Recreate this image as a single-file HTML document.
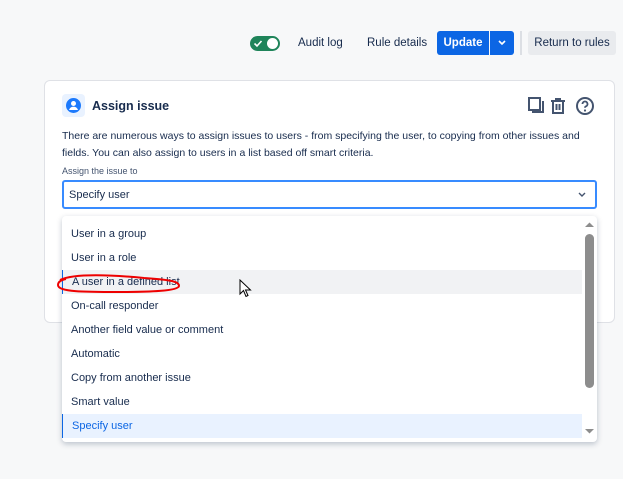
<!DOCTYPE html>
<html><head><style>
*{box-sizing:border-box;margin:0;padding:0}
body{width:623px;height:479px;background:#f7f8f9;font-family:"Liberation Sans",sans-serif;color:#172b4d;position:relative;overflow:hidden}
.a{position:absolute}
.btn{font-size:11.5px;line-height:25px;position:absolute;top:31px;height:24px}
.item{position:absolute;left:62px;width:520px;height:24px;line-height:25px;font-size:11px;padding-left:9px;color:#172b4d}
</style></head><body>
<div class="a" style="left:250px;top:36px;width:30px;height:15px;border-radius:8px;background:#1f845a"></div>
<div class="a" style="left:267px;top:38px;width:11px;height:11px;border-radius:50%;background:#fff"></div>
<svg class="a" style="left:253px;top:39px" width="10" height="9"><path d="M1.5 4.5l2.5 2.5 4.5-5" stroke="#fff" stroke-width="1.6" fill="none"/></svg>
<div class="btn" style="left:298px">Audit log</div>
<div class="btn" style="left:367px">Rule details</div>
<div class="btn" style="left:437px;width:52px;background:#0c66e4;color:#fff;font-weight:bold;text-align:center;border-radius:3px 0 0 3px">Update</div>
<div class="btn" style="left:490px;width:24px;background:#0c66e4;border-radius:0 3px 3px 0"></div>
<svg class="a" style="left:498px;top:40px" width="8" height="6"><path d="M1 1l3 3 3-3" stroke="#fff" stroke-width="1.6" fill="none"/></svg>
<div class="a" style="left:520px;top:31px;width:2px;height:24px;background:#dcdfe4"></div>
<div class="btn" style="left:528px;width:88px;background:#e9ebee;border-radius:3px;text-align:center">Return to rules</div>

<div class="a" style="left:44px;top:80px;width:571px;height:243px;background:#fff;border:1px solid #dfe1e6;border-radius:6px"></div>
<div class="a" style="left:62px;top:94px;width:23px;height:23px;background:#e9f2ff;border-radius:4px"></div>
<svg class="a" style="left:65px;top:97px" width="17" height="17" viewBox="0 0 17 17"><circle cx="8.5" cy="8.5" r="7.5" fill="#1d7afc"/><circle cx="8.5" cy="6.5" r="2.5" fill="#fff"/><path d="M4 13c1-2.5 2.5-3.2 4.5-3.2s3.5.7 4.5 3.2" fill="#fff"/></svg>
<div class="a" style="left:92px;top:99px;font-size:12.5px;font-weight:bold;color:#172b4d">Assign issue</div>
<svg class="a" style="left:527px;top:96px" width="70" height="20" viewBox="0 0 70 20">
<rect x="2" y="2" width="11" height="12" fill="none" stroke="#44546f" stroke-width="2"/><path d="M16 5v11H5" stroke="#44546f" stroke-width="2" fill="none"/>
<path d="M24 5h14M29 5V3h4v2M26 5v12h10V5M29.5 8v6M32.5 8v6" stroke="#44546f" stroke-width="2" fill="none"/>
<circle cx="58" cy="10" r="8" fill="none" stroke="#44546f" stroke-width="2"/><path d="M55.5 8a2.5 2.5 0 1 1 3.5 2.3c-.7.3-1 .8-1 1.5" stroke="#44546f" stroke-width="1.8" fill="none"/><circle cx="58" cy="14.5" r="1.1" fill="#44546f"/>
</svg>
<div class="a" style="left:62px;top:128px;width:540px;font-size:10.5px;line-height:17px;color:#172b4d">There are numerous ways to assign issues to users - from specifying the user, to copying from other issues and fields. You can also assign to users in a list based off smart criteria.</div>
<div class="a" style="left:62px;top:166px;font-size:9px;color:#44546f">Assign the issue to</div>
<div class="a" style="left:62px;top:180px;width:535px;height:29px;border:2px solid #388bff;border-radius:3px;background:#fff;font-size:11px;line-height:27px;padding-left:5px">Specify user</div>
<svg class="a" style="left:578px;top:192px" width="8" height="6"><path d="M1 1l3 3 3-3" stroke="#44546f" stroke-width="1.4" fill="none"/></svg>

<div class="a" style="left:62px;top:216px;width:535px;height:226px;background:#fff;border-radius:4px;box-shadow:0 2px 6px rgba(9,30,66,.25)"></div>
<div class="item" style="top:222px">User in a group</div>
<div class="item" style="top:246px">User in a role</div>
<div class="item" style="top:270px;background:#f1f2f4;border-left:1px solid #0c66e4">A user in a defined list</div>
<div class="item" style="top:294px">On-call responder</div>
<div class="item" style="top:318px">Another field value or comment</div>
<div class="item" style="top:342px">Automatic</div>
<div class="item" style="top:366px">Copy from another issue</div>
<div class="item" style="top:390px">Smart value</div>
<div class="item" style="top:414px;background:#e9f2ff;color:#0c66e4;border-left:1px solid #0c66e4">Specify user</div>
<div class="a" style="left:585px;top:234px;width:9px;height:154px;border-radius:5px;background:#8d8d8d"></div>
<svg class="a" style="left:585px;top:222px" width="9" height="6"><path d="M0 5l4.5-4.5L9 5z" fill="#8d8d8d"/></svg>
<svg class="a" style="left:585px;top:428px" width="9" height="6"><path d="M0 1h9L4.5 5.5z" fill="#8d8d8d"/></svg>
<svg class="a" style="left:54px;top:268px" width="132" height="30"><path d="M6 12C20 5 60 7 90 10c30 2 35 4 35 8-1 5-30 6-60 6C30 24 4 24 4 17c0-3 3-5 8-6" fill="none" stroke="#e00" stroke-width="2"/></svg>
<svg class="a" style="left:239px;top:279px" width="14" height="20"><path d="M1 1v14l3.5-3.5 2.5 6 2-1-2.5-5.5h5z" fill="#fff" stroke="#000" stroke-width="1"/></svg>
</body></html>
